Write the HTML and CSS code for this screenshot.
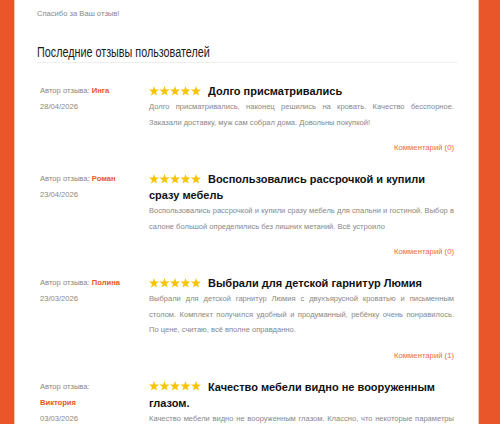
FILE: index.html
```html
<!DOCTYPE html>
<html>
    <head>
        <title>Отзывы</title>
        <meta charset="utf-8">
        <link rel="stylesheet" href="styles.css">
    </head>
    <body>
        <div class="page">
            <p class="thanks">Спасибо за Ваш отзыв!</p>
            <h2 class="section-title"><span>Последние отзывы пользователей</span></h2>

            <div class="review">
                <div class="review-meta">
                    <p class="author">Автор отзыва: <b>Инга</b></p>
                    <p class="date">28/04/2026</p>
                </div>
                <div class="review-body">
                    <h3 class="review-title">
                        <svg class="stars" viewBox="0 0 52 10"><use href="#s" x="0"/><use href="#s" x="10.5"/><use href="#s" x="21"/><use href="#s" x="31.5"/><use href="#s" x="42"/></svg>Долго присматривались
                    </h3>
                    <p class="review-text">Долго присматривались, наконец решились на кровать. Качество бесспорное. Заказали доставку, муж сам собрал дома. Довольны покупкой!</p>
                    <a class="comments" href="#">Комментарий (0)</a>
                </div>
            </div>

            <div class="review">
                <div class="review-meta">
                    <p class="author">Автор отзыва: <b>Роман</b></p>
                    <p class="date">23/04/2026</p>
                </div>
                <div class="review-body">
                    <h3 class="review-title">
                        <svg class="stars" viewBox="0 0 52 10"><use href="#s" x="0"/><use href="#s" x="10.5"/><use href="#s" x="21"/><use href="#s" x="31.5"/><use href="#s" x="42"/></svg>Воспользовались рассрочкой и купили сразу мебель
                    </h3>
                    <p class="review-text">Воспользовались рассрочкой и купили сразу мебель для спальни и гостиной. Выбор в салоне большой определились без лишних метаний. Всё устроило</p>
                    <a class="comments" href="#">Комментарий (0)</a>
                </div>
            </div>

            <div class="review">
                <div class="review-meta">
                    <p class="author">Автор отзыва: <b>Полина</b></p>
                    <p class="date">23/03/2026</p>
                </div>
                <div class="review-body">
                    <h3 class="review-title">
                        <svg class="stars" viewBox="0 0 52 10"><use href="#s" x="0"/><use href="#s" x="10.5"/><use href="#s" x="21"/><use href="#s" x="31.5"/><use href="#s" x="42"/></svg>Выбрали для детской гарнитур Люмия
                    </h3>
                    <p class="review-text">Выбрали для детской гарнитур Люмия с двухъярусной кроватью и письменным столом. Комплект получился удобный и продуманный, ребёнку очень понравилось. По цене, считаю, всё вполне оправданно.</p>
                    <a class="comments" href="#">Комментарий (1)</a>
                </div>
            </div>

            <div class="review">
                <div class="review-meta">
                    <p class="author">Автор отзыва: <b>Виктория</b></p>
                    <p class="date">03/03/2026</p>
                </div>
                <div class="review-body">
                    <h3 class="review-title">
                        <svg class="stars" viewBox="0 0 52 10"><use href="#s" x="0"/><use href="#s" x="10.5"/><use href="#s" x="21"/><use href="#s" x="31.5"/><use href="#s" x="42"/></svg>Качество мебели видно не вооруженным глазом.
                    </h3>
                    <p class="review-text">Качество мебели видно не вооруженным глазом. Классно, что некоторые параметры можно подобрать под себя, всё сделали аккуратно и в срок.</p>
                    <a class="comments" href="#">Комментарий (0)</a>
                </div>
            </div>
        </div>

        <svg width="0" height="0" class="defs">
            <defs>
                <polygon id="s" fill="#f8c300" points="5,0 6.2,3.5 10,3.6 7,5.9 8.1,9.6 5,7.4 1.9,9.6 3,5.9 0,3.6 3.8,3.5"/>
            </defs>
        </svg>
    </body>
</html>
```

FILE: styles.css
```css
body {
    margin: 0;
    background: #e8562a;
    font-family: "Liberation Sans", Arial, sans-serif;
}
.page {
    margin: 0 21px 0 14px;
    padding: 6px 21px 0 22px;
    min-height: 424px;
    box-sizing: border-box;
    background: #fff;
    border-left: 1px solid #f6c4ad;
    border-right: 1px solid #f6c4ad;
}
.thanks {
    margin: 0;
    font-size: 7.6px;
    line-height: 16px;
    color: #888;
}
.section-title {
    margin: 21px 0 0 0;
    padding-bottom: 1px;
    font-weight: normal;
    font-size: 14px;
    line-height: 18px;
    color: #1a1a1a;
    border-bottom: 1px solid #eee;
    white-space: nowrap;
}
.section-title span {
    display: inline-block;
    transform: scaleX(0.77);
    transform-origin: left center;
}
.review {
    display: flex;
    gap: 25px;
    padding: 0 3px;
    margin-top: 15px;
}
.section-title + .review {
    margin-top: 20px;
}
.review-meta {
    width: 84px;
    flex: none;
    font-size: 7.6px;
    color: #888;
}
.author {
    margin: 0;
    line-height: 16px;
}
.author b {
    color: #e8562a;
}
.date {
    margin: 0;
    line-height: 15px;
}
.review-body {
    flex: 1;
    display: flex;
    flex-direction: column;
}
.review-title {
    margin: 0;
    font-size: 11px;
    line-height: 16px;
    color: #111;
}
.stars {
    width: 52px;
    height: 10px;
    margin-right: 7px;
    vertical-align: -0.5px;
}
.review-text {
    margin: 0;
    font-size: 7.55px;
    line-height: 15.5px;
    color: #888;
    text-align: justify;
}
.comments {
    align-self: flex-end;
    margin-top: 10px;
    font-size: 7.7px;
    line-height: 16px;
    color: #ee6a45;
    text-decoration: none;
}
.defs {
    position: absolute;
}
```
